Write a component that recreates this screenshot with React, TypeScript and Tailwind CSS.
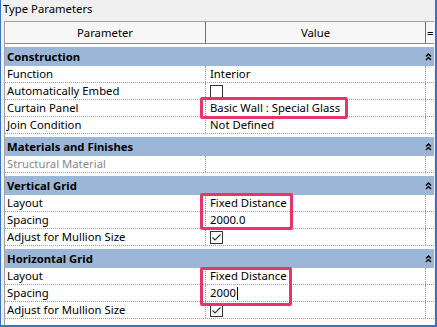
import React from 'react'

type Row = { p: string; v?: string; check?: boolean; disabled?: boolean; cursor?: boolean }
type Section = { title: string; rows: Row[] }

const SECTIONS: Section[] = [
  {
    title: 'Construction',
    rows: [
      { p: 'Function', v: 'Interior' },
      { p: 'Automatically Embed', check: false },
      { p: 'Curtain Panel', v: 'Basic Wall : Special Glass' },
      { p: 'Join Condition', v: 'Not Defined' },
    ],
  },
  {
    title: 'Materials and Finishes',
    rows: [{ p: 'Structural Material', v: '', disabled: true }],
  },
  {
    title: 'Vertical Grid',
    rows: [
      { p: 'Layout', v: 'Fixed Distance' },
      { p: 'Spacing', v: '2000.0' },
      { p: 'Adjust for Mullion Size', check: true },
    ],
  },
  {
    title: 'Horizontal Grid',
    rows: [
      { p: 'Layout', v: 'Fixed Distance' },
      { p: 'Spacing', v: '2000', cursor: true },
      { p: 'Adjust for Mullion Size', check: true },
    ],
  },
]

function Collapse() {
  return (
    <svg width="7" height="8" viewBox="0 0 7 8" className="block">
      <path d="M1 3.5 L3.5 1 L6 3.5 M1 7 L3.5 4.5 L6 7" fill="none" stroke="#000" strokeWidth="1.4" />
    </svg>
  )
}

function Checkbox({ checked }: { checked: boolean }) {
  return (
    <div className="w-[13px] h-[13px] border border-[#333] bg-white flex items-center justify-center">
      {checked && (
        <svg width="11" height="11" viewBox="0 0 11 11">
          <path d="M1.5 5.5 L4 8 L9.5 2.5" fill="none" stroke="#333" strokeWidth="1.2" />
        </svg>
      )}
    </div>
  )
}

export default function App() {
  return (
    <div className="relative w-[437px] h-[327px] bg-[#f0f0f0] border-l border-r-2 border-b-2 border-[#3b73c4] flex flex-col font-['Noto_Sans',sans-serif] text-[11.3px] text-black leading-none overflow-hidden">
      {/* Title */}
      <div className="h-[21px] flex items-center pl-[2px] pb-[3px]">Type Parameters</div>

      {/* Table */}
      <div className="flex-1 ml-[3px] mr-[1px] bg-white border-l border-t border-[#a0a0a0] flex flex-col">
        {/* Header */}
        <div className="h-[22px] flex bg-[#f7f7f7] border-b border-[#8c8c8c]">
          <div className="w-[201px] flex items-center justify-center border-r border-[#6e6e6e]">Parameter</div>
          <div className="w-[220px] flex items-center justify-center border-r border-[#6e6e6e]">Value</div>
          <div className="flex-1 flex items-center pl-[1px] overflow-hidden">=</div>
        </div>

        {SECTIONS.map((s) => (
          <div key={s.title} className="mt-[3px] flex flex-col">
            <div className="h-[19px] bg-[#9bb6d6] flex items-center justify-between pl-[2px] pr-[2px] font-bold">
              <span>{s.title}</span>
              <Collapse />
            </div>
            {s.rows.map((r, i) => (
              <div key={i} className="h-[17px] flex border-b border-dotted border-[#9a9a9a]">
                <div
                  className={`w-[201px] flex items-center pl-[2px] border-r border-dotted border-[#9a9a9a] ${
                    r.disabled ? 'text-[#8a8a8a]' : ''
                  }`}
                >
                  {r.p}
                </div>
                <div className="w-[220px] flex items-center pl-[4px] border-r border-dotted border-[#9a9a9a]">
                  {r.check !== undefined ? (
                    <Checkbox checked={r.check} />
                  ) : (
                    <span className="flex items-center">
                      {r.v}
                      {r.cursor && <span className="w-px h-[13px] bg-black ml-[1px]" />}
                    </span>
                  )}
                </div>
                <div className="flex-1" />
              </div>
            ))}
          </div>
        ))}
      </div>

      {/* Highlight boxes */}
      <div className="absolute left-[199px] top-[97px] w-[148px] h-[22px] border-[3px] border-[#e8336b] rounded-[2px]" />
      <div className="absolute left-[199px] top-[193px] w-[93px] h-[37px] border-[3px] border-[#e8336b] rounded-[2px]" />
      <div className="absolute left-[199px] top-[267px] w-[92px] h-[39px] border-[3px] border-[#e8336b] rounded-[2px]" />
    </div>
  )
}
